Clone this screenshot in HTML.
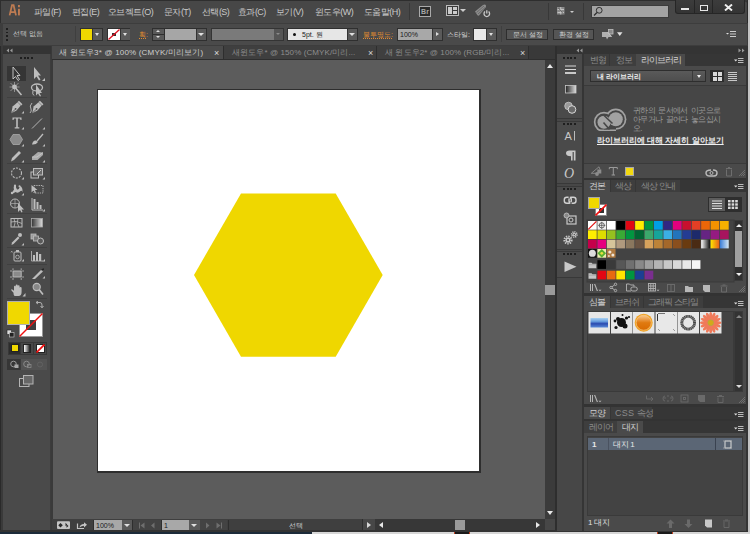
<!DOCTYPE html>
<html><head><meta charset="utf-8">
<style>
*{margin:0;padding:0;box-sizing:border-box}
html,body{width:750px;height:534px;overflow:hidden;background:#3a3a3a;font-family:"Liberation Sans",sans-serif;}
.a{position:absolute}
.t{position:absolute;white-space:nowrap;color:#c9c9c9;font-size:8px;line-height:10px}
.s{position:absolute;white-space:nowrap;color:#c9c9c9;font-size:7px;line-height:8px}
.tri{position:absolute;width:0;height:0;border-left:3px solid transparent;border-right:3px solid transparent;border-top:3px solid #e0e0e0}
.btn{position:absolute;background:#5a5a5a;border:1px solid #353535}
.grip{position:absolute;height:2px;background:repeating-linear-gradient(90deg,#1e1e1e 0 2.2px,transparent 2.2px 3.5px)}
.pm{position:absolute;width:10px;height:7px}
</style></head><body>
<!-- ===== MENUBAR ===== -->
<div class="a" style="left:0;top:0;width:748px;height:23px;background:#474747;border-left:1px solid #2e2e2e;border-top:1px solid #2e2e2e;border-top-right-radius:5px"></div>
<div class="a" style="left:747px;top:0;width:1px;height:532px;background:#2a2a2a"></div><div class="a" style="left:748px;top:0;width:2px;height:534px;background:#c4c4c4"></div>
<svg class="a" style="left:0;top:0" width="25" height="20" viewBox="0 0 25 20"><path d="M9.6 15.4 L12 5.2 H13.6 L16 15.4 M10.6 12 H15" fill="none" stroke="#bd7b52" stroke-width="1.75"/><rect x="18" y="8.8" width="1.9" height="6.6" fill="#bd7b52"/><rect x="18" y="5" width="1.9" height="2.2" fill="#bd7b52"/></svg>
<div class="t" style="left:34px;top:7px;font-size:9px;letter-spacing:-0.55px">파일(F)</div>
<div class="t" style="left:72px;top:7px;font-size:9px;letter-spacing:-0.55px">편집(E)</div>
<div class="t" style="left:108px;top:7px;font-size:9px;letter-spacing:-0.55px">오브젝트(O)</div>
<div class="t" style="left:164px;top:7px;font-size:9px;letter-spacing:-0.55px">문자(T)</div>
<div class="t" style="left:202px;top:7px;font-size:9px;letter-spacing:-0.55px">선택(S)</div>
<div class="t" style="left:238px;top:7px;font-size:9px;letter-spacing:-0.55px">효과(C)</div>
<div class="t" style="left:276px;top:7px;font-size:9px;letter-spacing:-0.55px">보기(V)</div>
<div class="t" style="left:315px;top:7px;font-size:9px;letter-spacing:-0.55px">윈도우(W)</div>
<div class="t" style="left:364px;top:7px;font-size:9px;letter-spacing:-0.55px">도움말(H)</div>
<div class="a" style="left:409px;top:3px;width:1px;height:17px;background:#383838"></div>
<div class="a" style="left:419px;top:6px;width:12px;height:11px;border:1px solid #aaa;background:#2a2a2a;color:#a8a8a8;font-size:7px;line-height:9px;text-align:center;font-weight:bold">Br</div>
<div class="a" style="left:446px;top:5px;width:13px;height:11px;border:1px solid #bbb;background:#3a3a3a"></div>
<div class="a" style="left:448px;top:7px;width:4px;height:7px;background:#ccc"></div>
<div class="a" style="left:453px;top:7px;width:4px;height:3px;background:#ccc"></div>
<div class="a" style="left:453px;top:11px;width:4px;height:3px;background:#ccc"></div>
<div class="tri" style="left:460px;top:9px;border-top-color:#ccc"></div>
<svg class="a" style="left:474px;top:3px" width="18" height="16" viewBox="0 0 18 16"><path d="M1 8.5 L9 2 Q12.5 0.5 12 4 L5 12.5 Q3.5 13 3 11.5 Z" fill="#8c8c8c"/><path d="M2.5 9.5 L10 3 M4 11 L11 4.5" stroke="#5a5a5a" stroke-width="0.7"/><circle cx="12.8" cy="11" r="3.6" fill="#474747"/><path d="M11 8.6 A2.8 2.8 0 1 0 14.6 8.6" fill="none" stroke="#c8c8c8" stroke-width="1.3"/><path d="M12.8 7.2 V10.6" stroke="#c8c8c8" stroke-width="1.3"/></svg>
<div class="a" style="left:548px;top:3px;width:1px;height:17px;background:#383838"></div>
<svg class="a" style="left:556px;top:6px" width="10" height="10"><rect x="1" y="1" width="7.5" height="7.5" fill="#8a8a8a"/><path d="M1.5 3.5 H8 M1.5 6.5 H8 M4.75 1 V8.5" stroke="#c8c8c8" stroke-width="0.9"/><path d="M2.5 2 L7 7.5" stroke="#555" stroke-width="0.8"/></svg>
<div class="tri" style="left:570px;top:11px;border-width:2px 2.5px 0 2.5px;border-top-color:#ccc"></div>
<div class="a" style="left:583px;top:3px;width:1px;height:17px;background:#383838"></div>
<div class="a" style="left:591px;top:5px;width:78px;height:13px;background:#a3a3a3;border:1px solid #3c3c3c"></div>
<svg class="a" style="left:592px;top:6px" width="12" height="11" viewBox="0 0 12 11"><circle cx="7.2" cy="4.3" r="2.9" fill="none" stroke="#303030" stroke-width="1"/><path d="M5 6.5 L2 9.5" stroke="#303030" stroke-width="1.3"/></svg>
<!-- window buttons -->
<div class="a" style="left:675px;top:0;width:70px;height:14px;background:linear-gradient(#3c3c3c,#343434);border:1px solid #262626;border-top:none;border-radius:0 0 3px 3px"></div>
<div class="a" style="left:694px;top:0;width:1px;height:13px;background:#252525"></div>
<div class="a" style="left:712px;top:0;width:1px;height:13px;background:#252525"></div>
<div class="a" style="left:681px;top:7.5px;width:7.5px;height:2.5px;background:#e8e8e8"></div>
<div class="a" style="left:700px;top:5px;width:7.5px;height:5.5px;border:1.7px solid #e8e8e8"></div>
<svg class="a" style="left:724px;top:4px" width="9" height="7" viewBox="0 0 9 7"><path d="M1 0.5 L8 6.5 M8 0.5 L1 6.5" stroke="#eee" stroke-width="1.9"/></svg>

<!-- ===== CONTROL BAR ===== -->
<div class="a" style="left:0;top:23px;width:748px;height:23px;background:#3d3d3d"></div>
<div class="a" style="left:3px;top:24px;width:744px;height:21px;background:#4a4a4a"></div>
<div class="a" style="left:6px;top:28px;width:2px;height:13px;background:repeating-linear-gradient(180deg,#1e1e1e 0 2px,transparent 2px 3.5px)"></div>
<div class="s" style="left:13px;top:30px">선택 없음</div>
<div class="a" style="left:75px;top:26px;width:1px;height:16px;background:#3f3f3f"></div>
<!-- fill -->
<div class="a" style="left:80px;top:28px;width:23px;height:13px;background:#2f2f2f"></div>
<div class="a" style="left:81px;top:29px;width:11px;height:11px;background:#f0d800"></div>
<div class="a" style="left:92px;top:29px;width:10px;height:11px;background:#5a5a5a;border-left:1px solid #333"></div>
<div class="tri" style="left:95px;top:33px;border-width:3px 2.5px 0 2.5px"></div>
<!-- stroke -->
<div class="a" style="left:107px;top:28px;width:23px;height:13px;background:#2f2f2f"></div>
<div class="a" style="left:108px;top:29px;width:12px;height:11px;background:#fff"></div>
<div class="a" style="left:112px;top:33px;width:4px;height:3px;background:#333"></div>
<svg class="a" style="left:108px;top:29px" width="12" height="11"><path d="M0.5 10.5 L11.5 0.5" stroke="#e01020" stroke-width="1.3"/></svg>
<div class="a" style="left:120px;top:29px;width:10px;height:11px;background:#5a5a5a;border-left:1px solid #333"></div>
<div class="tri" style="left:123px;top:33px;border-width:3px 2.5px 0 2.5px"></div>
<div class="s" style="left:139px;top:31px;color:#e08a30;text-decoration:underline dotted;text-underline-offset:1px">획:</div>
<!-- stepper -->
<div class="a" style="left:152px;top:28px;width:55px;height:13px;background:#2f2f2f"></div>
<div class="a" style="left:153px;top:29px;width:11px;height:5px;background:#5a5a5a"></div>
<div class="a" style="left:153px;top:35px;width:11px;height:5px;background:#5a5a5a"></div>
<div class="tri" style="left:156px;top:30px;border-width:0 2.5px 2.5px 2.5px;border-top:0;border-bottom:2.5px solid #ddd"></div>
<div class="tri" style="left:156px;top:36px;border-width:2.5px 2.5px 0 2.5px"></div>
<div class="a" style="left:165px;top:29px;width:31px;height:11px;background:#a6a6a6"></div>
<div class="a" style="left:196px;top:29px;width:10px;height:11px;background:#5a5a5a;border-left:1px solid #333"></div>
<div class="tri" style="left:198px;top:33px;border-width:3px 3px 0 3px"></div>
<!-- var width -->
<div class="a" style="left:211px;top:28px;width:73px;height:13px;background:#343434"></div>
<div class="a" style="left:212px;top:29px;width:62px;height:11px;background:#7a7a7a"></div>
<div class="a" style="left:274px;top:29px;width:9px;height:11px;background:#555"></div>
<div class="tri" style="left:276px;top:33px;border-width:2.5px 2.5px 0 2.5px;border-top-color:#8a8a8a"></div>
<!-- brush -->
<div class="a" style="left:287px;top:28px;width:71px;height:13px;background:#2f2f2f"></div>
<div class="a" style="left:288px;top:29px;width:59px;height:11px;background:#e6e6e6"></div>
<div class="a" style="left:293px;top:33px;width:3px;height:3px;border-radius:50%;background:#111"></div>
<div class="s" style="left:302px;top:31px;color:#222">5pt. 원</div>
<div class="a" style="left:347px;top:29px;width:10px;height:11px;background:#5a5a5a;border-left:1px solid #333"></div>
<div class="tri" style="left:349px;top:33px;border-width:3px 3px 0 3px"></div>
<div class="s" style="left:363px;top:31px;color:#e08a30;text-decoration:underline dotted;text-underline-offset:1px">불투명도:</div>
<!-- opacity -->
<div class="a" style="left:397px;top:28px;width:46px;height:13px;background:#2f2f2f"></div>
<div class="a" style="left:398px;top:29px;width:34px;height:11px;background:#a8a8a8"></div>
<div class="s" style="left:400px;top:31px;color:#1a1a1a">100%</div>
<div class="a" style="left:432px;top:29px;width:10px;height:11px;background:#5a5a5a;border-left:1px solid #333"></div>
<div class="tri" style="left:436px;top:32px;border-width:2.5px 0 2.5px 3px;border-color:transparent transparent transparent #ddd;border-style:solid"></div>
<div class="s" style="left:447px;top:31px;color:#d8d8d8">스타일:</div>
<div class="a" style="left:473px;top:28px;width:24px;height:13px;background:#2f2f2f"></div>
<div class="a" style="left:474px;top:29px;width:12px;height:11px;background:#e8e8e8"></div>
<div class="a" style="left:486px;top:29px;width:10px;height:11px;background:#5a5a5a;border-left:1px solid #333"></div>
<div class="tri" style="left:489px;top:33px;border-width:3px 2.5px 0 2.5px"></div>
<div class="a" style="left:501px;top:26px;width:1px;height:16px;background:#3f3f3f"></div>
<div class="a" style="left:506px;top:29px;width:42px;height:11px;background:#555;border:1px solid #2e2e2e"></div>
<div class="s" style="left:513px;top:31px;color:#cfcfcf">문서 설정</div>
<div class="a" style="left:553px;top:29px;width:41px;height:11px;background:#555;border:1px solid #2e2e2e"></div>
<div class="s" style="left:559px;top:31px;color:#cfcfcf">환경 설정</div>
<svg class="a" style="left:600px;top:28px" width="16" height="13" viewBox="600 28 16 13"><rect x="608.5" y="29.5" width="4.5" height="4.5" fill="#8a8a8a" stroke="#bdbdbd" stroke-width="0.8"/><path d="M602 32 H608 L612 37 H608.5 L607 39.5 L606 37 H602Z" fill="#b0b0b0"/><path d="M608 32.5 L611.5 36.5" stroke="#d0d0d0" stroke-width="0.8"/></svg>
<svg class="a" style="left:616px;top:31px" width="8" height="6"><path d="M1 1.2 H6.5 L3.75 5Z" fill="#e0e0e0"/></svg>
<svg class="a" style="left:726px;top:31px" width="10" height="7" viewBox="0 0 10 7"><path d="M0 2 H3 L1.5 3.5 Z" fill="#ddd"/><path d="M4 0.5 H10 M4 3 H10 M4 5.5 H10" stroke="#ccc" stroke-width="1"/></svg>
<!-- ===== LEFT TOOLBAR ===== -->
<div class="a" style="left:0;top:46px;width:3px;height:488px;background:#3a3a3a;border-left:1px solid #2a2a2a"></div>
<div class="a" style="left:3px;top:46px;width:48px;height:8px;background:#343434"></div>
<svg class="a" style="left:6px;top:48px" width="7" height="5" viewBox="0 0 7 5"><path d="M3 0.5 V4.5 L0.5 2.5Z M6.5 0.5 V4.5 L4 2.5Z" fill="#9a9a9a"/></svg>
<div class="a" style="left:3px;top:54px;width:48px;height:477px;background:#4a4a4a;border-right:1px solid #3c3c3c"></div>
<div class="grip" style="left:20px;top:57px;width:13px"></div>
<div class="a" style="left:7px;top:66px;width:19px;height:15px;background:#353535"></div>
<!-- separators -->
<div class="a" style="left:7px;top:97px;width:40px;height:1px;background:#404040"></div>
<div class="a" style="left:7px;top:163px;width:40px;height:1px;background:#404040"></div>
<div class="a" style="left:7px;top:213px;width:40px;height:1px;background:#404040"></div>
<div class="a" style="left:7px;top:247px;width:40px;height:1px;background:#404040"></div>
<div class="a" style="left:7px;top:264px;width:40px;height:1px;background:#404040"></div>
<div class="a" style="left:7px;top:298px;width:40px;height:1px;background:#404040"></div>
<!-- tool icons -->
<svg class="a" style="left:0;top:60px" width="51" height="240" viewBox="0 60 51 240">
<g fill="#bdbdbd" stroke="none">
<!-- selection (row 73) -->
<path d="M13 67 L13 79 L15.5 76.5 L18 80.5 L19.5 79.5 L17 75.5 L20 75.5 Z" fill="none" stroke="#cfcfcf" stroke-width="0.9"/>
<!-- direct select -->
<path d="M34 67 L34 79 L36.5 76.5 L39 80.5 L40.5 79.5 L38 75.5 L41 75.5 Z"/>
<path d="M45 78 L45 81 L42 81Z"/>
<g transform="translate(0 1.5)"><!-- magic wand row 88.5 -->
<circle cx="14.5" cy="85.5" r="2.4"/><path d="M15.5 86.5 L21.5 93.5" stroke="#bdbdbd" stroke-width="1.5"/>
<path d="M10.5 81.5 L18.5 89.5 M18.5 81.5 L10.5 89.5 M14.5 80.5 V90.5 M9.5 85.5 H19.5" stroke="#bdbdbd" stroke-width="0.6"/>
<!-- lasso -->
<ellipse cx="37" cy="86" rx="5.5" ry="3.5" fill="none" stroke="#bdbdbd" stroke-width="1.3"/>
<path d="M36 83 L36 94 L38 92 L40 95 L41 94.5 L39.5 91.5 L42 91.5Z"/>
<path d="M33 89 Q32 93 34 94" fill="none" stroke="#bdbdbd" stroke-width="1"/>
</g>
<!-- pen row 107.5 -->
<path d="M11.3 113.3 L12.6 106.5 L17.6 102.3 L20.7 105.4 L16.5 110.4 Z"/><path d="M18.3 101.3 L21.8 104.8" stroke="#bdbdbd" stroke-width="1.8"/>
<path d="M11.5 113 L15.3 109.2" stroke="#4a4a4a" stroke-width="0.8"/><circle cx="15.6" cy="108.8" r="0.9" fill="#4a4a4a"/>
<path d="M24 111 L24 113.5 L21.5 113.5Z"/>
<path d="M32.3 113.3 L33.6 106.5 L38.6 102.3 L41.7 105.4 L37.5 110.4 Z"/><path d="M39.3 101.3 L42.8 104.8" stroke="#bdbdbd" stroke-width="1.8"/>
<path d="M32.5 113 L36.3 109.2" stroke="#4a4a4a" stroke-width="0.8"/><circle cx="36.6" cy="108.8" r="0.9" fill="#4a4a4a"/>
<path d="M32 103 Q29 106 31 109 Q32 111 30 113" fill="none" stroke="#bdbdbd" stroke-width="0.9"/>
<!-- type row 123 -->
<path d="M12.5 117.5 H21.5 V120 H20.5 L20 118.5 H17.8 V127.3 H19.3 V128.5 H14.7 V127.3 H16.2 V118.5 H14 L13.5 120 H12.5Z"/>
<path d="M24 127 L24 129.5 L21.5 129.5Z"/>
<path d="M32 128.5 L42 118.5" stroke="#bdbdbd" stroke-width="0.9"/>
<path d="M45 127 L45 129.5 L42.5 129.5Z"/>
<!-- shape row 139.6 -->
<path d="M13 134.5 H19.5 L22.5 139.5 L19.5 144.5 H13 L10 139.5Z" fill="#8a8a8a" stroke="#aaa" stroke-width="0.8"/>
<path d="M24 144 L24 146.5 L21.5 146.5Z"/>
<path d="M32 144.5 Q33 140 36 140.5 L38 142 Q36 145 32 144.5Z"/><path d="M37 141 L43 134" stroke="#bdbdbd" stroke-width="1.3"/>
<path d="M45 144 L45 146.5 L42.5 146.5Z"/>
<!-- pencil/eraser row 156 -->
<path d="M11 161.5 L12 158 L19 151 L21 153 L14 160 Z"/>
<path d="M24 160 L24 162.5 L21.5 162.5Z"/>
<path d="M32 157 L38 152 L43 152.5 L43 155 L37.5 160 L32 160Z" fill="#aaa"/><path d="M32 157 L37 157 L43 152.5" fill="none" stroke="#d0d0d0" stroke-width="0.7"/>
<path d="M45 160 L45 162.5 L42.5 162.5Z"/>
<!-- rotate row 173 -->
<circle cx="16.5" cy="173" r="5" fill="none" stroke="#bdbdbd" stroke-width="1.1" stroke-dasharray="2 1.2"/>
<path d="M24 177 L24 179.5 L21.5 179.5Z"/>
<!-- scale -->
<rect x="31" y="172" width="7.5" height="6" fill="none" stroke="#bdbdbd" stroke-width="1"/>
<rect x="33.5" y="168.5" width="9" height="6.5" fill="#6a6a6a" stroke="#bdbdbd" stroke-width="1"/>
<path d="M37 174 L41 170" stroke="#ddd" stroke-width="0.8"/>
<path d="M45 177 L45 179.5 L42.5 179.5Z"/>
<!-- warp row 189 -->
<path d="M12 192.5 L14 189.5 Q13 186 15 185.5 Q16.5 185.5 16 187.5 L17 189.5 Q19 190 19.5 187.5 Q20 185.5 21.5 187 Q23 189 22.5 192 Q21.5 190 20 191.5 Q18 193.5 15.5 192 L13 193.5Z"/><circle cx="12" cy="193" r="1.2"/><circle cx="15" cy="185.7" r="1.1"/><circle cx="19.5" cy="186.2" r="1"/>
<path d="M24 193 L24 195.5 L21.5 195.5Z"/>
<!-- free transform -->
<rect x="34" y="185.5" width="9" height="7.5" fill="none" stroke="#bdbdbd" stroke-width="0.9" stroke-dasharray="1.3 1"/>
<path d="M31.5 185 L31.5 192.5 L33.5 190.5 L35 193 L36 192.5 L35 190 L37.5 190Z"/>
<!-- shape builder row 205 -->
<circle cx="15" cy="203.5" r="4.5" fill="none" stroke="#bdbdbd" stroke-width="1"/><path d="M11 203.5 H19 M15 199.5 V207.5" stroke="#bdbdbd" stroke-width="0.6"/>
<path d="M18 203 L18 212 L20 210 L21.5 212.5 L22.5 212 L21.5 209.5 L24 209.5Z"/>
<!-- graph -->
<path d="M32 198 V210 H43" fill="none" stroke="#bdbdbd" stroke-width="1"/>
<rect x="33.5" y="199" width="2" height="10" /><rect x="36.5" y="202" width="2" height="7"/><rect x="39.5" y="205" width="2" height="4"/>
<path d="M45 209 L45 211.5 L42.5 211.5Z"/>
<!-- mesh row 223 -->
<rect x="11" y="218.5" width="11" height="8.5" fill="none" stroke="#bdbdbd" stroke-width="1"/>
<path d="M11 222 Q16 220 22 223.5 M14 218.5 Q16 223 14 227 M18 218.5 Q16 223 19 227" fill="none" stroke="#bdbdbd" stroke-width="0.8"/>
<!-- gradient -->
<defs><linearGradient id="g1"><stop offset="0" stop-color="#333"/><stop offset="1" stop-color="#ddd"/></linearGradient></defs>
<rect x="31.5" y="218.5" width="11" height="8.5" fill="url(#g1)" stroke="#aaa" stroke-width="0.8"/>
<!-- eyedropper row 239.5 -->
<path d="M11.5 245 L12 242.5 L18 236.5 L19.5 238 L13.5 244Z"/><circle cx="20" cy="235" r="2"/>
<path d="M24 243 L24 245.5 L21.5 245.5Z"/>
<!-- blend -->
<rect x="31" y="234" width="5" height="5" fill="#9a9a9a" stroke="#bdbdbd" stroke-width="0.8"/>
<rect x="33.5" y="236" width="5" height="5" fill="#7a7a7a" stroke="#bdbdbd" stroke-width="0.8"/>
<circle cx="40.5" cy="241" r="3" fill="#5a5a5a" stroke="#bdbdbd" stroke-width="1"/>
<!-- symbol sprayer row 256.5 -->
<rect x="14" y="252" width="7" height="9" rx="1" fill="none" stroke="#bdbdbd" stroke-width="1"/><circle cx="17.5" cy="257" r="1.8" fill="none" stroke="#bdbdbd" stroke-width="0.8"/>
<rect x="16" y="250" width="3" height="2"/><path d="M11 251 L12.5 252.5 M12.5 251 L11 252.5" stroke="#bdbdbd" stroke-width="0.6"/>
<path d="M24 259 L24 261.5 L21.5 261.5Z"/>
<!-- column graph -->
<path d="M31.5 251 V261 H43" fill="none" stroke="#bdbdbd" stroke-width="0.8"/>
<rect x="33" y="255" width="2" height="6"/><rect x="36" y="252" width="2" height="9"/><rect x="39" y="254" width="2.2" height="7"/>
<path d="M45 259 L45 261.5 L42.5 261.5Z"/>
<!-- artboard row 273.5 -->
<rect x="13" y="271" width="8.2" height="6" fill="#8a8a8a" stroke="#bdbdbd" stroke-width="0.9"/>
<path d="M10 271 H12 M22.2 271 H24 M10 277 H12 M22.2 277 H24 M13 278 V280 M21.2 278 V280 M13 268.3 V270 M21.2 268.3 V270" stroke="#bdbdbd" stroke-width="0.8"/>
<!-- slice -->
<path d="M32 279 L41 270 L43 271.5 L35 279Z"/><path d="M41 270 L43.5 268 L44 270Z" fill="#222"/>
<path d="M45 276 L45 278.5 L42.5 278.5Z"/>
<!-- hand row 289 -->
<path d="M14.5 296 Q13.3 294.5 13.5 292.8 L11.3 290.3 Q10.8 289.2 12 289.2 L14 290.8 V287 Q14 285.8 14.9 285.8 Q15.7 285.8 15.7 287 V289.5 V285.6 Q15.7 284.6 16.7 284.6 Q17.7 284.6 17.7 285.6 V289.5 V286.1 Q17.7 285.2 18.6 285.2 Q19.6 285.2 19.6 286.1 V289.8 V288 Q19.6 287 20.6 287 Q21.6 287 21.6 288 V292 Q21.6 296 18.5 296 Z"/>
<path d="M25.5 293 L25.5 296.5 L22.5 296.5Z"/>
<circle cx="36.7" cy="287" r="3.6" fill="#888" stroke="#bdbdbd" stroke-width="1.1"/><path d="M39.3 289.8 L43 294.5" stroke="#bdbdbd" stroke-width="1.7"/>
</g>
</svg>
<!-- fill / stroke -->
<div class="a" style="left:19px;top:313px;width:24px;height:24px;background:#fff;border:1px solid #999"></div>
<div class="a" style="left:26px;top:320px;width:10px;height:10px;background:#3e3e3e"></div>
<svg class="a" style="left:19px;top:313px" width="24" height="24"><path d="M0.5 23.5 L23.5 0.5" stroke="#f01010" stroke-width="1.4"/></svg>
<div class="a" style="left:7px;top:301px;width:23px;height:24px;background:#f0d800;border:1px solid #b0b0b0"></div>
<svg class="a" style="left:35px;top:301px" width="9" height="8" viewBox="0 0 9 8"><path d="M1.5 1.5 H5 Q7 1.5 7 4 V6.5 M5.5 5 L7 6.8 L8.5 5 M3 0 L1 1.5 L3 3" fill="none" stroke="#bbb" stroke-width="0.9"/></svg>
<svg class="a" style="left:6px;top:329px" width="9" height="9"><rect x="1" y="1" width="4.5" height="4.5" fill="#ddd" stroke="#222" stroke-width="0.6"/><rect x="3.5" y="3.5" width="4.5" height="4.5" fill="#222" stroke="#ccc" stroke-width="0.6"/></svg>
<div class="a" style="left:8px;top:342px;width:39px;height:13px;background:#383838"></div>
<div class="a" style="left:9px;top:343px;width:11px;height:11px;background:#2c2c2c"></div>
<div class="a" style="left:10.5px;top:344px;width:8px;height:8px;background:#f0d800;border:1px solid #222"></div>
<div class="a" style="left:21px;top:343px;width:12px;height:11px;background:#474747"></div>
<div class="a" style="left:23px;top:344px;width:8px;height:8.5px;background:linear-gradient(90deg,#fff,#1a1a1a);border:1px solid #222"></div>
<div class="a" style="left:34px;top:343px;width:12px;height:11px;background:#474747"></div>
<div class="a" style="left:36px;top:344px;width:8.5px;height:8.5px;background:#fff;border:1px solid #222"></div>
<svg class="a" style="left:36px;top:344px" width="9" height="9"><path d="M0.5 8.5 L8.5 0.5" stroke="#f01010" stroke-width="1.8"/></svg>
<div class="a" style="left:7px;top:359px;width:40px;height:11px;background:#3c3c3c"></div>
<div class="a" style="left:21px;top:359px;width:12.5px;height:11px;background:#535353"></div><div class="a" style="left:34px;top:359px;width:13px;height:11px;background:#535353"></div>
<div class="a" style="left:7px;top:359px;width:13px;height:11px;background:#363636"></div>
<svg class="a" style="left:7px;top:359px" width="40" height="11"><circle cx="6.5" cy="5" r="2.8" fill="none" stroke="#9a9a9a" stroke-width="1"/><rect x="7.5" y="5.5" width="4" height="3.5" fill="#a8a8a8"/><circle cx="19.5" cy="5" r="2.8" fill="none" stroke="#8a8a8a" stroke-width="1"/><rect x="20.5" y="5.5" width="3.5" height="3" fill="none" stroke="#8a8a8a" stroke-width="0.8"/><circle cx="33" cy="5.5" r="2.5" fill="none" stroke="#626262" stroke-width="1"/></svg>
<svg class="a" style="left:18px;top:374px" width="17" height="14"><rect x="1.5" y="4.5" width="9.5" height="8" fill="none" stroke="#b4b4b4" stroke-width="1"/><rect x="5.5" y="1.5" width="9.5" height="8.5" fill="#676767" stroke="#b4b4b4" stroke-width="1"/></svg>

<!-- ===== DOC TABS ===== -->
<div class="a" style="left:51px;top:46px;width:506px;height:14px;background:#393939"></div>
<div class="a" style="left:52px;top:46px;width:171px;height:13px;background:#4b4b4b"></div>
<div class="t" style="left:59px;top:48px;font-size:8px;letter-spacing:0.18px;color:#cfcfcf">새 윈도우3* @ 100% (CMYK/미리보기)</div>
<div class="t" style="left:214px;top:48px;font-size:9px;color:#ddd">×</div>
<div class="a" style="left:223px;top:46px;width:1px;height:13px;background:#2e2e2e"></div>
<div class="a" style="left:224px;top:46px;width:152px;height:13px;background:#3f3f3f"></div>
<div class="t" style="left:232px;top:48px;font-size:8px;letter-spacing:0.1px;color:#8e8e8e">새윈도우* @ 150% (CMYK/미리...</div>
<div class="t" style="left:368px;top:48px;font-size:9px;color:#d8d8d8">×</div>
<div class="a" style="left:376px;top:46px;width:1px;height:13px;background:#2e2e2e"></div>
<div class="a" style="left:377px;top:46px;width:151px;height:13px;background:#3f3f3f"></div>
<div class="t" style="left:385px;top:48px;font-size:8px;letter-spacing:0.1px;color:#8e8e8e">새 윈도우2* @ 100% (RGB/미리...</div>
<div class="t" style="left:520px;top:48px;font-size:9px;color:#d8d8d8">×</div>
<div class="a" style="left:528px;top:46px;width:1px;height:13px;background:#2e2e2e"></div>

<!-- ===== CANVAS ===== -->
<div class="a" style="left:52px;top:59px;width:505px;height:1px;background:#2e2e2e"></div>
<div class="a" style="left:53px;top:60px;width:492px;height:459px;background:#5c5c5c"></div>
<div class="a" style="left:97px;top:89px;width:384px;height:384px;background:#2e2e2e"></div>
<div class="a" style="left:98px;top:90px;width:381px;height:381px;background:#fff"></div>
<svg class="a" style="left:0;top:0" width="750" height="534"><polygon points="241,193.4 335.7,193.4 382.7,275 335.7,356.8 241,356.8 194,275" fill="#efd700"/></svg>
<!-- v scrollbar -->
<div class="a" style="left:545px;top:60px;width:10px;height:459px;background:#3b3b3b"></div>
<div class="tri" style="left:547px;top:64px;border-width:0 3.5px 4px 3.5px;border-top:0;border-bottom:4px solid #e8e8e8"></div>
<div class="a" style="left:545px;top:285px;width:10px;height:10px;background:#9a9a9a"></div>
<div class="tri" style="left:547px;top:511px;border-width:4px 3.5px 0 3.5px;border-top-color:#e8e8e8"></div>
<div class="a" style="left:555px;top:46px;width:2px;height:488px;background:#2e2e2e"></div>
<!-- status bar -->
<div class="a" style="left:52px;top:519px;width:503px;height:12px;background:#3f3f3f"></div>
<div class="a" style="left:545px;top:519px;width:10px;height:12px;background:#474747"></div>
<div class="a" style="left:52px;top:531px;width:505px;height:2px;background:#4a4a4a"></div>
<div class="a" style="left:0;top:530px;width:748px;height:2px;background:#333"></div>
<div class="a" style="left:0;top:532px;width:312px;height:2px;background:#1c2b3a"></div>
<div class="a" style="left:312px;top:532px;width:438px;height:2px;background:#d6d6d6"></div>
<div class="a" style="left:454px;top:532px;width:16px;height:2px;background:#1a1a1a;border-left:1px solid #c04020;border-right:1px solid #c04020"></div>
<div class="a" style="left:657px;top:532px;width:16px;height:2px;background:#1a1a1a;border-left:1px solid #c04020;border-right:1px solid #c04020"></div>
<svg class="a" style="left:56px;top:520px" width="32" height="11"><rect x="1" y="1.3" width="13" height="7.7" rx="1" fill="#c4c4c4"/><path d="M4.5 3 L6.8 5.2 L4.5 7.4 L2.3 5.2Z" fill="#2a2a2a"/><path d="M9.5 2.8 L11.2 4.5 L9.5 6.2Z M10.5 4.2 L12.5 6 L10.5 7.8 Z" fill="#2a2a2a"/><path d="M21.5 3.5 V8.5 H28" fill="none" stroke="#c4c4c4" stroke-width="1.2"/><path d="M23.5 7.5 Q24 4 28 4 V2.2 L31 4.8 L28 7.4 V5.8 Q25.5 5.8 23.5 7.5Z" fill="#c4c4c4"/></svg>
<div class="a" style="left:93px;top:520px;width:40px;height:10px;background:#2e2e2e"></div>
<div class="a" style="left:94px;top:520px;width:28px;height:10px;background:#a8a8a8"></div>
<div class="s" style="left:96px;top:522px;color:#1a1a1a">100%</div>
<div class="a" style="left:122px;top:520px;width:10px;height:10px;background:#5a5a5a"></div>
<div class="tri" style="left:124px;top:524px;border-width:3px 3px 0 3px"></div>
<div class="a" style="left:133px;top:520px;width:28px;height:10px;background:#434343"></div><svg class="a" style="left:136px;top:521px" width="22" height="9"><path d="M3.5 1.5 V7.5" stroke="#6e6e6e"/><path d="M8.5 1.5 V7.5 L4.5 4.5Z M18.5 1.5 V7.5 L15 4.5Z" fill="#6e6e6e"/></svg>
<div class="a" style="left:161px;top:520px;width:40px;height:10px;background:#2e2e2e"></div>
<div class="a" style="left:162px;top:520px;width:27px;height:10px;background:#a8a8a8"></div>
<div class="s" style="left:164px;top:522px;color:#1a1a1a">1</div>
<div class="a" style="left:189px;top:520px;width:11px;height:10px;background:#5a5a5a"></div>
<div class="tri" style="left:191px;top:524px;border-width:3px 3px 0 3px"></div>
<div class="a" style="left:200px;top:520px;width:27px;height:10px;background:#434343"></div><svg class="a" style="left:204px;top:521px" width="22" height="9"><path d="M2 1.5 V7.5 L5.5 4.5Z M12.5 1.5 V7.5 L16.5 4.5Z" fill="#6e6e6e"/><path d="M17.5 1.5 V7.5" stroke="#6e6e6e"/></svg>
<div class="a" style="left:228px;top:520px;width:1px;height:10px;background:#2e2e2e"></div>
<div class="s" style="left:289px;top:522px;color:#cfcfcf">선택</div>
<div class="a" style="left:362px;top:519px;width:1px;height:11px;background:#2e2e2e"></div><div class="a" style="left:363px;top:519px;width:12px;height:11px;background:#474747"></div>
<div class="tri" style="left:367px;top:522px;border-width:3px 0 3px 4.5px;border-style:solid;border-color:transparent transparent transparent #d8d8d8"></div>
<div class="a" style="left:375px;top:519px;width:170px;height:11px;background:#373737"></div>
<div class="tri" style="left:379px;top:522px;border-width:3px 4.5px 3px 0;border-style:solid;border-color:transparent #e8e8e8 transparent transparent"></div>
<div class="a" style="left:455px;top:520px;width:10px;height:10px;background:#9a9a9a"></div>
<div class="tri" style="left:536px;top:522px;border-width:3px 0 3px 4px;border-style:solid;border-color:transparent transparent transparent #e8e8e8"></div>

<!-- ===== RIGHT DOCK ===== -->
<div class="a" style="left:557px;top:46px;width:191px;height:8px;background:#343434"></div>
<svg class="a" style="left:576px;top:48px" width="7" height="5" viewBox="0 0 7 5"><path d="M3 0.5 V4.5 L0.5 2.5Z M6.5 0.5 V4.5 L4 2.5Z" fill="#9a9a9a"/></svg>
<svg class="a" style="left:738px;top:48px" width="7" height="5" viewBox="0 0 7 5"><path d="M0.5 0.5 V4.5 L3 2.5Z M4 0.5 V4.5 L6.5 2.5Z" fill="#9a9a9a"/></svg>
<!-- icon strip -->
<div class="a" style="left:557px;top:54px;width:25px;height:477px;background:#474747"></div>
<div class="a" style="left:557px;top:54px;width:25px;height:65px;background:#4a4a4a;border-bottom:1px solid #383838"></div>
<div class="a" style="left:557px;top:121px;width:25px;height:63px;background:#4a4a4a;border-bottom:1px solid #383838;border-top:1px solid #383838"></div>
<div class="a" style="left:557px;top:186px;width:25px;height:64px;background:#4a4a4a;border-bottom:1px solid #383838;border-top:1px solid #383838"></div>
<div class="a" style="left:557px;top:251px;width:25px;height:27px;background:#4a4a4a;border-bottom:1px solid #383838;border-top:1px solid #383838"></div>
<div class="grip" style="left:563px;top:57px;width:13px"></div>
<div class="grip" style="left:563px;top:123px;width:13px"></div>
<div class="grip" style="left:563px;top:188px;width:13px"></div>
<div class="grip" style="left:563px;top:253px;width:13px"></div>
<svg class="a" style="left:557px;top:54px" width="26" height="230" viewBox="557 54 26 230">
<path d="M565 66 H576 M565 69.5 H576" stroke="#d8d8d8" stroke-width="1"/><path d="M565 73 H576" stroke="#d8d8d8" stroke-width="1.8"/>
<defs><linearGradient id="g2"><stop offset="0" stop-color="#222"/><stop offset="1" stop-color="#ddd"/></linearGradient></defs>
<rect x="565.5" y="85.5" width="10.5" height="7.5" fill="url(#g2)" stroke="#c8c8c8" stroke-width="0.8"/>
<circle cx="568.5" cy="106" r="3.8" fill="#9a9a9a" stroke="#c8c8c8" stroke-width="0.8"/><circle cx="572" cy="109.5" r="3.8" fill="#6a6a6a" stroke="#d8d8d8" stroke-width="1"/>
<text x="564.5" y="140" font-family="Liberation Sans" font-size="11" fill="#c8c8c8">A</text><path d="M574.5 131 V140.5" stroke="#c8c8c8" stroke-width="0.9"/>
<path d="M569.5 150.5 H575.5 V160.5 H573.8 V152 H572.6 V160.5 H571 V156.2 Q566 156.2 566 153.3 Q566 150.5 569.5 150.5Z" fill="#c8c8c8"/>
<text x="564" y="178" font-family="Liberation Serif" font-style="italic" font-size="14" fill="#c8c8c8">O</text>
<rect x="564.3" y="197.3" width="7" height="6" rx="2.5" fill="none" stroke="#d0d0d0" stroke-width="1.4"/><rect x="569" y="197.3" width="7" height="6" rx="2.5" fill="none" stroke="#d0d0d0" stroke-width="1.4"/><rect x="568.6" y="196" width="1.2" height="2.6" fill="#4a4a4a"/><rect x="570.4" y="202" width="1.2" height="2.6" fill="#4a4a4a"/>
<rect x="567" y="216" width="9" height="8" fill="none" stroke="#c8c8c8" stroke-width="1.2"/><circle cx="571" cy="220" r="2" fill="none" stroke="#c8c8c8" stroke-width="1"/><circle cx="566.5" cy="215.5" r="2.5" fill="#888" stroke="#c8c8c8" stroke-width="0.8"/>
<circle cx="568" cy="240" r="3.6" fill="none" stroke="#c8c8c8" stroke-width="2" stroke-dasharray="1.4 1"/><circle cx="568" cy="240" r="2.6" fill="#c8c8c8"/><circle cx="568" cy="240" r="1" fill="#4a4a4a"/><circle cx="574.3" cy="234.5" r="2.6" fill="none" stroke="#c8c8c8" stroke-width="1.6" stroke-dasharray="1.1 0.9"/><circle cx="574.3" cy="234.5" r="1.8" fill="#c8c8c8"/><circle cx="574.3" cy="234.5" r="0.7" fill="#4a4a4a"/>
<path d="M564.5 261.5 V272 L576.5 266.75Z" fill="#c8c8c8"/>
</svg>
<div class="a" style="left:582px;top:54px;width:2px;height:477px;background:#353535"></div>
<div class="a" style="left:746px;top:54px;width:2px;height:477px;background:#353535"></div>

<!-- ===== LIBRARIES PANEL ===== -->
<div class="a" style="left:584px;top:54px;width:162px;height:12px;background:#363636"></div>
<div class="a" style="left:584px;top:54px;width:25px;height:12px;background:#3e3e3e"></div>
<div class="a" style="left:610px;top:54px;width:26px;height:12px;background:#3e3e3e"></div>
<div class="a" style="left:636px;top:54px;width:49px;height:12px;background:#4a4a4a"></div>
<div class="t" style="left:590px;top:55px;font-size:9px;letter-spacing:-0.9px;color:#8a8a8a">변형</div>
<div class="t" style="left:616px;top:55px;font-size:9px;letter-spacing:-0.9px;color:#8a8a8a">정보</div>
<div class="t" style="left:641px;top:55px;font-size:9px;letter-spacing:-0.9px;color:#cfcfcf">라이브러리</div>
<svg class="pm" style="left:734px;top:57px"><path d="M0 2.5 H3.5 L1.75 4.5Z" fill="#ddd"/><path d="M4 1.5 H9.5 M4 3.5 H9.5 M4 5.5 H9.5" stroke="#bbb" stroke-width="1"/></svg>
<div class="a" style="left:584px;top:66px;width:162px;height:112px;background:#4a4a4a"></div>
<div class="a" style="left:590px;top:70px;width:116px;height:12px;background:linear-gradient(#5a5a5a,#4e4e4e);border:1px solid #2e2e2e"></div>
<div class="s" style="left:597px;top:73px;font-size:7.4px;color:#f0f0f0;font-weight:bold">내 라이브러리</div>
<div class="a" style="left:692px;top:71px;width:1px;height:10px;background:#3a3a3a"></div>
<div class="tri" style="left:697px;top:75px;border-width:3px 2.5px 0 2.5px;border-top-color:#eee"></div>
<div class="a" style="left:710px;top:70px;width:14px;height:12px;background:#2c2c2c"></div>
<div class="a" style="left:713px;top:72px;width:4px;height:4px;background:#d8d8d8"></div>
<div class="a" style="left:718px;top:72px;width:4px;height:4px;background:#d8d8d8"></div>
<div class="a" style="left:713px;top:77px;width:4px;height:4px;background:#d8d8d8"></div>
<div class="a" style="left:718px;top:77px;width:4px;height:4px;background:#d8d8d8"></div>
<svg class="a" style="left:728px;top:72px" width="9" height="9"><path d="M0 0.5 H9 M0 2.5 H9 M0 4.5 H9 M0 6.5 H9 M0 8.5 H9" stroke="#c8c8c8" stroke-width="1"/></svg>
<div class="a" style="left:584px;top:85px;width:162px;height:1px;background:#3a3a3a"></div>
<div class="a" style="left:584px;top:86px;width:162px;height:77px;background:#464646"></div>
<svg class="a" style="left:592px;top:106px" width="36" height="27" viewBox="0 0 36 27">
<defs><clipPath id="cc1"><rect x="0" y="0" width="36" height="25"/></clipPath><clipPath id="cc2"><rect x="0" y="0" width="36" height="23.4"/></clipPath></defs>
<g clip-path="url(#cc1)" fill="#a2a2a2"><circle cx="12" cy="16" r="10.2"/><circle cx="23.8" cy="13.2" r="10.6"/><rect x="12" y="14" width="12" height="12"/></g>
<g clip-path="url(#cc2)" fill="#464646"><circle cx="12" cy="16" r="8.5"/><circle cx="23.8" cy="13.2" r="8.9"/><rect x="12" y="14" width="12" height="12"/></g>
<circle cx="12" cy="16.2" r="6.5" fill="#a2a2a2"/><circle cx="23.8" cy="13.3" r="7" fill="#a2a2a2"/>
<path d="M11.5 9 L20.5 17.5" stroke="#464646" stroke-width="1.6"/>
<path d="M11.5 16.5 L17.5 23.5" stroke="#464646" stroke-width="1.6"/>
</svg>
<div class="s" style="left:633px;top:107px;font-size:8px;letter-spacing:-0.75px;word-spacing:2.2px;color:#9a9a9a;line-height:8.8px">귀하의 문서에서 이곳으로<br>아무거나 끌어다 놓으십시<br>오.</div>
<div class="s" style="left:597px;top:136px;font-size:8px;line-height:9px;color:#f0f0f0;font-weight:bold;text-decoration:underline">라이브러리에 대해 자세히 알아보기</div>
<div class="a" style="left:584px;top:163px;width:162px;height:1px;background:#3a3a3a"></div>
<svg class="a" style="left:590px;top:165px" width="158" height="13" viewBox="590 165 158 13">
<path d="M591.3 173.3 L599 166.8 L600 169.5" fill="none" stroke="#8c8c8c" stroke-width="0.9"/><path d="M591.3 173.3 H597" stroke="#8c8c8c" stroke-width="0.9"/><rect x="597.3" y="169.5" width="4" height="4" fill="#8c8c8c"/><circle cx="597" cy="174" r="1.9" fill="#8c8c8c"/>
<path d="M609.3 169.2 V167.5 H617.3 V169.2 M613.3 167.5 V175 M611.6 175 H615" fill="none" stroke="#9a9a9a" stroke-width="1"/>
<path d="M711 170 Q706 170 706 173 Q706 176 710 176 H714 Q717 176 717 173 Q717 170 713 170" fill="none" stroke="#bbb" stroke-width="1.4"/><circle cx="711.5" cy="173" r="1.5" fill="none" stroke="#bbb" stroke-width="1"/>
<path d="M726 168.5 H732 M728 167.5 H730 M726.5 169.5 V176 H731.5 V169.5" fill="none" stroke="#6e6e6e" stroke-width="1"/>
<path d="M739 176 L745 170 M741 176 L745 172 M743 176 L745 174" stroke="#777" stroke-width="0.8"/>
</svg>
<div class="a" style="left:625px;top:167px;width:9px;height:9px;background:#f2d810;border:1px solid #a8a8a8"></div>

<!-- ===== SWATCHES PANEL ===== -->
<div class="a" style="left:584px;top:178px;width:162px;height:2px;background:#333"></div>
<div class="a" style="left:584px;top:180px;width:162px;height:12px;background:#363636"></div>
<div class="a" style="left:584px;top:180px;width:26px;height:12px;background:#4a4a4a"></div>
<div class="a" style="left:611px;top:180px;width:24px;height:12px;background:#3e3e3e"></div>
<div class="a" style="left:636px;top:180px;width:44px;height:12px;background:#3e3e3e"></div>
<div class="t" style="left:589px;top:181px;font-size:9px;letter-spacing:-0.9px;color:#cfcfcf">견본</div>
<div class="t" style="left:615px;top:181px;font-size:9px;letter-spacing:-0.9px;color:#8a8a8a">색상</div>
<div class="t" style="left:641px;top:181px;font-size:9px;letter-spacing:-0.9px;color:#8a8a8a">색상 안내</div>
<svg class="pm" style="left:734px;top:183px"><path d="M0 2.5 H3.5 L1.75 4.5Z" fill="#ddd"/><path d="M4 1.5 H9.5 M4 3.5 H9.5 M4 5.5 H9.5" stroke="#bbb" stroke-width="1"/></svg>
<div class="a" style="left:584px;top:192px;width:162px;height:101px;background:#4a4a4a"></div>
<div class="a" style="left:595px;top:204px;width:12px;height:12px;background:#fff;border:1px solid #888"></div>
<div class="a" style="left:599px;top:208px;width:4.5px;height:4.5px;background:#333"></div>
<svg class="a" style="left:595px;top:204px" width="12" height="12"><path d="M0.5 11.5 L11.5 0.5" stroke="#f01010" stroke-width="1.6"/></svg>
<div class="a" style="left:588px;top:197px;width:12px;height:12px;background:#f0d800;border:1px solid #a8a8a8"></div>
<div class="a" style="left:708px;top:197px;width:34px;height:15px;background:#2e2e2e"></div>
<div class="a" style="left:709px;top:198px;width:16px;height:13px;background:#5c5c5c"></div>
<svg class="a" style="left:712px;top:200px" width="10" height="9"><path d="M0 1 H10 M0 3.5 H10 M0 6 H10 M0 8.5 H10" stroke="#e0e0e0" stroke-width="1"/></svg>
<svg class="a" style="left:728px;top:200px" width="10" height="9"><g fill="#d8d8d8"><rect x="0" y="0" width="2.6" height="2.4"/><rect x="3.6" y="0" width="2.6" height="2.4"/><rect x="7.2" y="0" width="2.6" height="2.4"/><rect x="0" y="3.3" width="2.6" height="2.4"/><rect x="3.6" y="3.3" width="2.6" height="2.4"/><rect x="7.2" y="3.3" width="2.6" height="2.4"/><rect x="0" y="6.6" width="2.6" height="2.4"/><rect x="3.6" y="6.6" width="2.6" height="2.4"/><rect x="7.2" y="6.6" width="2.6" height="2.4"/></g></svg>
<svg class="a" style="left:0;top:0" width="750" height="534">
<defs><linearGradient id="sg1"><stop offset="0" stop-color="#fff"/><stop offset="1" stop-color="#111"/></linearGradient>
<linearGradient id="sg2"><stop offset="0" stop-color="#ffe600"/><stop offset="1" stop-color="#e8601a"/></linearGradient>
<linearGradient id="sg3"><stop offset="0" stop-color="#3a7ed8"/><stop offset="1" stop-color="#d8e8f4"/></linearGradient></defs>
<rect x="587" y="220" width="147" height="62" fill="#434343" stroke="#3a3a3a" stroke-width="1"/>
<rect x="588.00" y="221.00" width="8.7" height="8.7" fill="#fff"/><path d="M588.30 229.40 L596.40 221.30" stroke="#e01010" stroke-width="1.2"/>
<rect x="597.43" y="221.00" width="8.7" height="8.7" fill="#f0f0f0"/><circle cx="601.78" cy="225.35" r="2.6" fill="none" stroke="#333" stroke-width="0.7"/><path d="M601.78 221.80 V228.90 M598.23 225.35 H605.33" stroke="#333" stroke-width="0.6"/>
<rect x="606.86" y="221.00" width="8.7" height="8.7" fill="#ffffff"/>
<rect x="616.29" y="221.00" width="8.7" height="8.7" fill="#000000"/>
<rect x="625.72" y="221.00" width="8.7" height="8.7" fill="#e20613"/>
<rect x="635.15" y="221.00" width="8.7" height="8.7" fill="#ffed00"/>
<rect x="644.58" y="221.00" width="8.7" height="8.7" fill="#009640"/>
<rect x="654.01" y="221.00" width="8.7" height="8.7" fill="#009fe3"/>
<rect x="663.44" y="221.00" width="8.7" height="8.7" fill="#312783"/>
<rect x="672.87" y="221.00" width="8.7" height="8.7" fill="#e5007e"/>
<rect x="682.30" y="221.00" width="8.7" height="8.7" fill="#c8102e"/>
<rect x="691.73" y="221.00" width="8.7" height="8.7" fill="#e33f25"/>
<rect x="701.16" y="221.00" width="8.7" height="8.7" fill="#ec6608"/>
<rect x="710.59" y="221.00" width="8.7" height="8.7" fill="#f39200"/>
<rect x="720.02" y="221.00" width="8.7" height="8.7" fill="#f7b000"/>
<rect x="588.00" y="230.30" width="8.7" height="8.7" fill="#ffed00"/>
<rect x="597.43" y="230.30" width="8.7" height="8.7" fill="#dedc00"/>
<rect x="606.86" y="230.30" width="8.7" height="8.7" fill="#95c11f"/>
<rect x="616.29" y="230.30" width="8.7" height="8.7" fill="#3aaa35"/>
<rect x="625.72" y="230.30" width="8.7" height="8.7" fill="#009640"/>
<rect x="635.15" y="230.30" width="8.7" height="8.7" fill="#006633"/>
<rect x="644.58" y="230.30" width="8.7" height="8.7" fill="#3ba86c"/>
<rect x="654.01" y="230.30" width="8.7" height="8.7" fill="#16a49a"/>
<rect x="663.44" y="230.30" width="8.7" height="8.7" fill="#3bafe4"/>
<rect x="672.87" y="230.30" width="8.7" height="8.7" fill="#2374bb"/>
<rect x="682.30" y="230.30" width="8.7" height="8.7" fill="#243c93"/>
<rect x="691.73" y="230.30" width="8.7" height="8.7" fill="#1d2a6b"/>
<rect x="701.16" y="230.30" width="8.7" height="8.7" fill="#662483"/>
<rect x="710.59" y="230.30" width="8.7" height="8.7" fill="#951b81"/>
<rect x="720.02" y="230.30" width="8.7" height="8.7" fill="#a7145e"/>
<rect x="588.00" y="239.70" width="8.7" height="8.7" fill="#c5004a"/>
<rect x="597.43" y="239.70" width="8.7" height="8.7" fill="#e6007e"/>
<rect x="606.86" y="239.70" width="8.7" height="8.7" fill="#d6c59a"/>
<rect x="616.29" y="239.70" width="8.7" height="8.7" fill="#b09a7e"/>
<rect x="625.72" y="239.70" width="8.7" height="8.7" fill="#8a775e"/>
<rect x="635.15" y="239.70" width="8.7" height="8.7" fill="#6a5443"/>
<rect x="644.58" y="239.70" width="8.7" height="8.7" fill="#d7a25c"/>
<rect x="654.01" y="239.70" width="8.7" height="8.7" fill="#bd8338"/>
<rect x="663.44" y="239.70" width="8.7" height="8.7" fill="#a4682a"/>
<rect x="672.87" y="239.70" width="8.7" height="8.7" fill="#8a4f1e"/>
<rect x="682.30" y="239.70" width="8.7" height="8.7" fill="#6a3b10"/>
<rect x="691.73" y="239.70" width="8.7" height="8.7" fill="#4a2b14"/>
<rect x="701.16" y="239.70" width="8.7" height="8.7" fill="url(#sg1)"/>
<rect x="710.59" y="239.70" width="8.7" height="8.7" fill="url(#sg2)"/>
<rect x="720.02" y="239.70" width="8.7" height="8.7" fill="url(#sg3)"/>
<rect x="588.00" y="249.00" width="8.7" height="8.7" fill="#111"/><circle cx="592.35" cy="253.35" r="3.5" fill="#dcdcdc"/>
<rect x="597.43" y="249.00" width="8.7" height="8.7" fill="#eef0b0"/><path d="M597.43 253.35 L601.78 249.00 L606.13 253.35 L601.78 257.70Z" fill="#5ab030"/><circle cx="601.78" cy="253.35" r="1.4" fill="#e8e040"/>
<rect x="606.86" y="249.00" width="8.7" height="8.7" fill="#b07a40"/><circle cx="609.86" cy="252.00" r="1.6" fill="#eee4d8"/><circle cx="612.86" cy="255.00" r="1.5" fill="#eee4d8"/><circle cx="608.86" cy="256.00" r="1" fill="#e8d8c8"/>
<path d="M588.50 262.70 H591.50 L592.50 263.70 H596.30 V268.20 H588.50Z" fill="#c4c4c4"/><path d="M588.50 264.70 H596.30" stroke="#8a8a8a" stroke-width="0.5"/>
<rect x="597.43" y="260.20" width="8.7" height="8.7" fill="#000000"/>
<rect x="606.86" y="260.20" width="8.7" height="8.7" fill="#3a3a3a"/>
<rect x="616.29" y="260.20" width="8.7" height="8.7" fill="#575757"/>
<rect x="625.72" y="260.20" width="8.7" height="8.7" fill="#707070"/>
<rect x="635.15" y="260.20" width="8.7" height="8.7" fill="#898989"/>
<rect x="644.58" y="260.20" width="8.7" height="8.7" fill="#a0a0a0"/>
<rect x="654.01" y="260.20" width="8.7" height="8.7" fill="#b4b4b4"/>
<rect x="663.44" y="260.20" width="8.7" height="8.7" fill="#c8c8c8"/>
<rect x="672.87" y="260.20" width="8.7" height="8.7" fill="#d9d9d9"/>
<rect x="682.30" y="260.20" width="8.7" height="8.7" fill="#e8e8e8"/>
<rect x="691.73" y="260.20" width="8.7" height="8.7" fill="#f5f5f5"/>
<path d="M588.50 273.20 H591.50 L592.50 274.20 H596.30 V278.70 H588.50Z" fill="#c4c4c4"/><path d="M588.50 275.20 H596.30" stroke="#8a8a8a" stroke-width="0.5"/>
<rect x="597.43" y="270.70" width="8.7" height="8.7" fill="#e30613"/>
<rect x="606.86" y="270.70" width="8.7" height="8.7" fill="#e86a10"/>
<rect x="616.29" y="270.70" width="8.7" height="8.7" fill="#ffe500"/>
<rect x="625.72" y="270.70" width="8.7" height="8.7" fill="#00963f"/>
<rect x="635.15" y="270.70" width="8.7" height="8.7" fill="#1c3f94"/>
<rect x="644.58" y="270.70" width="8.7" height="8.7" fill="#7a2e8f"/>
</svg>
<div class="a" style="left:734px;top:220px;width:9px;height:61px;background:#2f2f2f;border:1px solid #3a3a3a"></div>
<div class="a" style="left:735px;top:231px;width:7px;height:36px;background:#a0a0a0"></div>
<div class="tri" style="left:735.5px;top:224px;border-width:0 3px 3px 3px;border-top:0;border-bottom:3px solid #eee"></div>
<div class="tri" style="left:735.5px;top:273px;border-width:3px 3px 0 3px;border-top-color:#eee"></div>
<svg class="a" style="left:588px;top:282px" width="158" height="11" viewBox="588 282 158 11">
<g fill="#b4b4b4"><rect x="590" y="284" width="1" height="7"/><rect x="592" y="284" width="1" height="7"/><path d="M594 284 H595.2 L598 291 H596.8Z"/><path d="M598.5 289.8 H601.5 L600 291.3Z"/></g>
<g fill="none" stroke="#b4b4b4" stroke-width="0.9"><circle cx="611" cy="287.5" r="1.2"/><circle cx="615.5" cy="284.3" r="1.2"/><circle cx="615.5" cy="290.5" r="1.2"/><path d="M612 286.8 L614.5 285 M612 288.2 L614.5 289.8"/>
<path d="M626.5 284 H629.5 L630.5 285 H634 V286.5 M626.5 284 V291 H631"/><rect x="630.8" y="287" width="6.5" height="4" rx="2"/>
<rect x="648.5" y="283.5" width="7" height="7.5"/><path d="M650.8 283.5 V291 M653.2 283.5 V291 M648.5 286 H655.5 M648.5 288.5 H655.5"/></g>
<path d="M656.5 289.8 H659.5 L658 291.3Z" fill="#b4b4b4"/>
<g fill="none" stroke="#6e6e6e" stroke-width="0.9"><rect x="667.5" y="284.5" width="7" height="7"/><path d="M671 284.5 V291.5"/></g>
<path d="M685 286 H688 L689 287 H693 V292 H685Z" fill="#b8b8b8"/>
<path d="M703 285 H710 V292 H705 L703 290Z" fill="#b8b8b8"/>
<path d="M720.5 286 H727.5 M722.5 285 H725.5 M721.5 287 V292 H726.5 V287" fill="none" stroke="#6e6e6e" stroke-width="0.9"/>
<path d="M739 292 L745 286 M741 292 L745 288 M743 292 L745 290" stroke="#777" stroke-width="0.8"/>
</svg>

<!-- ===== SYMBOLS PANEL ===== -->
<div class="a" style="left:584px;top:293px;width:162px;height:3px;background:#333"></div>
<div class="a" style="left:584px;top:296px;width:162px;height:12px;background:#363636"></div>
<div class="a" style="left:584px;top:296px;width:26px;height:12px;background:#4a4a4a"></div>
<div class="a" style="left:611px;top:296px;width:32px;height:12px;background:#3e3e3e"></div>
<div class="a" style="left:644px;top:296px;width:59px;height:12px;background:#3e3e3e"></div>
<div class="t" style="left:589px;top:297px;font-size:9px;letter-spacing:-0.9px;color:#cfcfcf">심볼</div>
<div class="t" style="left:615px;top:297px;font-size:9px;letter-spacing:-0.9px;color:#8a8a8a">브러쉬</div>
<div class="t" style="left:648px;top:297px;font-size:9px;letter-spacing:-0.9px;color:#8a8a8a">그래픽 스타일</div>
<svg class="pm" style="left:734px;top:300px"><path d="M0 2.5 H3.5 L1.75 4.5Z" fill="#ddd"/><path d="M4 1.5 H9.5 M4 3.5 H9.5 M4 5.5 H9.5" stroke="#bbb" stroke-width="1"/></svg>
<div class="a" style="left:584px;top:308px;width:162px;height:96px;background:#4a4a4a"></div>
<div class="a" style="left:587px;top:311px;width:147px;height:81px;background:#434343;border:1px solid #3a3a3a"></div>
<div class="a" style="left:734px;top:311px;width:9px;height:81px;background:#333;border:1px solid #3a3a3a"></div>
<div class="tri" style="left:735.5px;top:315px;border-width:0 3px 3px 3px;border-top:0;border-bottom:3px solid #888"></div>
<div class="tri" style="left:735.5px;top:385px;border-width:3px 3px 0 3px;border-top-color:#ddd"></div>
<svg class="a" style="left:588px;top:312px" width="134" height="22" viewBox="588 312 134 22">
<defs>
<linearGradient id="sy1" x1="0" y1="0" x2="0" y2="1"><stop offset="0" stop-color="#a8d0f0"/><stop offset="0.35" stop-color="#6aa0e0"/><stop offset="0.6" stop-color="#2a4ab0"/><stop offset="1" stop-color="#5a8ad8"/></linearGradient>
<linearGradient id="sy3" x1="0" y1="0" x2="0" y2="1"><stop offset="0" stop-color="#f8c890"/><stop offset="0.5" stop-color="#e07a10"/><stop offset="1" stop-color="#d86a00"/></linearGradient>
<radialGradient id="sy6"><stop offset="0" stop-color="#d8a000"/><stop offset="0.25" stop-color="#e8c040"/><stop offset="0.3" stop-color="#f07050"/><stop offset="1" stop-color="#f0806a"/></radialGradient>
</defs>
<rect x="588.5" y="312" width="21.5" height="21.5" fill="#e6e6e6"/>
<rect x="590.5" y="318" width="17.5" height="9.5" fill="url(#sy1)"/>
<rect x="611" y="312" width="21.5" height="21.5" fill="#e6e6e6"/>
<g fill="#111"><circle cx="621.5" cy="322.5" r="4.5"/><circle cx="618" cy="319" r="2"/><circle cx="625" cy="326" r="2.5"/><circle cx="626.5" cy="318" r="1.6"/><circle cx="615" cy="321" r="1.4"/><circle cx="616" cy="327.5" r="1.6"/><circle cx="622.5" cy="315" r="1"/><circle cx="629" cy="317" r="1.1"/></g>
<rect x="633" y="312" width="21.5" height="21.5" fill="#e6e6e6"/>
<circle cx="643.7" cy="322.7" r="9" fill="#f0a020"/><circle cx="643.7" cy="322.7" r="7.5" fill="url(#sy3)" stroke="#f8d090" stroke-width="0.6"/>
<rect x="655.5" y="312" width="21.5" height="21.5" fill="#e8e8e8"/>
<path d="M657.5 314 V321" stroke="#333" stroke-width="1"/><path d="M658 313.5 L665 313.5" stroke="#555" stroke-width="0.8"/><path d="M673 329 L675 331 M658 329 L660 331 M673 314 L675 316" stroke="#888" stroke-width="0.8"/>
<rect x="677.5" y="312" width="21.5" height="21.5" fill="#e6e6e6"/>
<circle cx="688.2" cy="322.7" r="6.4" fill="none" stroke="#8a8a8a" stroke-width="2.8"/><circle cx="688.2" cy="322.7" r="6.4" fill="none" stroke="#3a3a3a" stroke-width="2.8" stroke-dasharray="0.7 0.9"/>
<rect x="700" y="312" width="21.5" height="21.5" fill="#e6e6e6"/>
<g fill="#f07a5a"><ellipse cx="710.7" cy="317.2" rx="1.6" ry="5.2" transform="rotate(0.0 710.7 322.7)"/><ellipse cx="710.7" cy="317.2" rx="1.6" ry="5.2" transform="rotate(22.5 710.7 322.7)"/><ellipse cx="710.7" cy="317.2" rx="1.6" ry="5.2" transform="rotate(45.0 710.7 322.7)"/><ellipse cx="710.7" cy="317.2" rx="1.6" ry="5.2" transform="rotate(67.5 710.7 322.7)"/><ellipse cx="710.7" cy="317.2" rx="1.6" ry="5.2" transform="rotate(90.0 710.7 322.7)"/><ellipse cx="710.7" cy="317.2" rx="1.6" ry="5.2" transform="rotate(112.5 710.7 322.7)"/><ellipse cx="710.7" cy="317.2" rx="1.6" ry="5.2" transform="rotate(135.0 710.7 322.7)"/><ellipse cx="710.7" cy="317.2" rx="1.6" ry="5.2" transform="rotate(157.5 710.7 322.7)"/><ellipse cx="710.7" cy="317.2" rx="1.6" ry="5.2" transform="rotate(180.0 710.7 322.7)"/><ellipse cx="710.7" cy="317.2" rx="1.6" ry="5.2" transform="rotate(202.5 710.7 322.7)"/><ellipse cx="710.7" cy="317.2" rx="1.6" ry="5.2" transform="rotate(225.0 710.7 322.7)"/><ellipse cx="710.7" cy="317.2" rx="1.6" ry="5.2" transform="rotate(247.5 710.7 322.7)"/><ellipse cx="710.7" cy="317.2" rx="1.6" ry="5.2" transform="rotate(270.0 710.7 322.7)"/><ellipse cx="710.7" cy="317.2" rx="1.6" ry="5.2" transform="rotate(292.5 710.7 322.7)"/><ellipse cx="710.7" cy="317.2" rx="1.6" ry="5.2" transform="rotate(315.0 710.7 322.7)"/><ellipse cx="710.7" cy="317.2" rx="1.6" ry="5.2" transform="rotate(337.5 710.7 322.7)"/></g><circle cx="710.7" cy="322.7" r="2.8" fill="#d4a818" stroke="#a8b040" stroke-width="0.7"/>
</svg>
<svg class="a" style="left:588px;top:393px" width="158" height="11" viewBox="588 393 158 11">
<g fill="#b4b4b4"><rect x="590" y="395" width="1" height="7"/><rect x="592" y="395" width="1" height="7"/><path d="M594 395 H595.2 L598 402 H596.8Z"/><path d="M598.5 400.8 H601.5 L600 402.3Z"/></g>
<g fill="none" stroke="#6a6a6a" stroke-width="0.9">
<path d="M646.5 395.5 V399 H653 M651 397 L653 399 L651 401"/>
<path d="M663.5 398 H666 M670 398 H672.5 M665 396 Q663 396 663 398.5 Q663 401 665 401 M671 396 Q673 396 673 398.5 Q673 401 671 401 M668 395 V397 M668 400 V402"/>
<rect x="681" y="395" width="7" height="7"/><rect x="683.5" y="397.5" width="2" height="2"/>
<path d="M717 396.5 H724 M719 395.5 H722 M718 397.5 V402.5 H723 V397.5"/>
</g>
<path d="M698 395 H705 V402 H700 L698 400Z" fill="#6a6a6a"/>
<path d="M739 403 L745 397 M741 403 L745 399 M743 403 L745 401" stroke="#777" stroke-width="0.8"/>
</svg>

<!-- ===== APPEARANCE (collapsed) ===== -->
<div class="a" style="left:584px;top:404px;width:162px;height:3px;background:#333"></div>
<div class="a" style="left:584px;top:407px;width:162px;height:12px;background:#363636"></div>
<div class="a" style="left:584px;top:407px;width:26px;height:12px;background:#4a4a4a"></div>
<div class="a" style="left:611px;top:407px;width:41px;height:12px;background:#3e3e3e"></div>
<div class="t" style="left:589px;top:408px;font-size:9px;letter-spacing:-0.9px;color:#cfcfcf">모양</div>
<div class="t" style="left:615px;top:408px;font-size:9px;letter-spacing:-0.9px;color:#8a8a8a"><span style="letter-spacing:0.2px">CSS </span>속성</div>
<svg class="pm" style="left:734px;top:411px"><path d="M0 2.5 H3.5 L1.75 4.5Z" fill="#ddd"/><path d="M4 1.5 H9.5 M4 3.5 H9.5 M4 5.5 H9.5" stroke="#bbb" stroke-width="1"/></svg>

<!-- ===== ARTBOARDS PANEL ===== -->
<div class="a" style="left:584px;top:419px;width:162px;height:2px;background:#333"></div>
<div class="a" style="left:584px;top:421px;width:162px;height:12px;background:#363636"></div>
<div class="a" style="left:584px;top:421px;width:33px;height:12px;background:#3e3e3e"></div>
<div class="a" style="left:617px;top:421px;width:26px;height:12px;background:#4a4a4a"></div>
<div class="t" style="left:589px;top:422px;font-size:9px;letter-spacing:-0.9px;color:#8a8a8a">레이어</div>
<div class="t" style="left:622px;top:422px;font-size:9px;letter-spacing:-0.9px;color:#cfcfcf">대지</div>
<svg class="pm" style="left:734px;top:425px"><path d="M0 2.5 H3.5 L1.75 4.5Z" fill="#ddd"/><path d="M4 1.5 H9.5 M4 3.5 H9.5 M4 5.5 H9.5" stroke="#bbb" stroke-width="1"/></svg>
<div class="a" style="left:584px;top:433px;width:162px;height:98px;background:#4a4a4a"></div>
<div class="a" style="left:587px;top:436px;width:156px;height:80px;background:#434343;border:1px solid #3a3a3a"></div>
<div class="a" style="left:588px;top:438px;width:154px;height:12px;background:#5b6675"></div>
<div class="a" style="left:608px;top:438px;width:1px;height:12px;background:#4a5260"></div>
<div class="a" style="left:715px;top:438px;width:1px;height:12px;background:#3a4250"></div>
<div class="s" style="left:592px;top:441px;font-size:8px;color:#e8e8e8;font-weight:bold">1</div>
<div class="s" style="left:613px;top:441px;font-size:8px;letter-spacing:-0.3px;color:#e8e8e8">대지 1</div>
<svg class="a" style="left:722px;top:439px" width="12" height="11"><rect x="3" y="2" width="6" height="7" fill="none" stroke="#ddd" stroke-width="1"/><path d="M1 2 H11 M1 9 H11" stroke="#aaa" stroke-width="0.7" stroke-dasharray="1 1"/></svg>
<div class="s" style="left:588px;top:519px;font-size:8px;letter-spacing:-0.3px;color:#e0e0e0">1 대지</div>
<svg class="a" style="left:665px;top:518px" width="70" height="11" viewBox="665 518 70 11">
<path d="M670.5 519.5 L674.5 523.5 H672 V528 H669 V523.5 H666.5Z" fill="#6a6a6a"/>
<path d="M688.5 528 L692.5 524 H690 V519.5 H687 V524 H684.5Z" fill="#6a6a6a"/>
<path d="M705 519.5 H712 V527.5 H707 L705 525.5Z" fill="#c8c8c8"/>
<path d="M723 521 H730 M725 520 H728 M724 522 V527.5 H729 V522" fill="none" stroke="#6a6a6a" stroke-width="0.9"/>
</svg>

<!-- BODY_START -->
</body></html>
